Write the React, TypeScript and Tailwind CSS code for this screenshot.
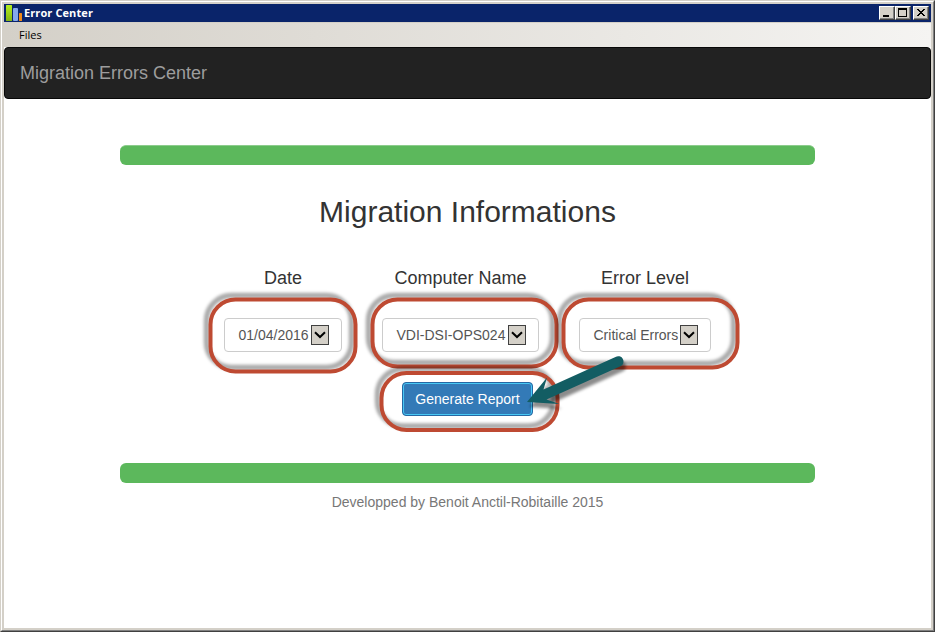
const arial = 'font-["Liberation_Sans",Arial,sans-serif]';

function WindowButton({ kind }: { kind: 'min' | 'max' | 'close' }) {
  return (
    <span className="block h-[14px] w-4 border border-t-white border-l-white border-r-[#404040] border-b-[#404040] bg-[#d4d0c8] shadow-[inset_-1px_-1px_0_#808080]">
      <svg width="14" height="12" viewBox="0 0 14 12" shapeRendering="crispEdges" className="block">
        {kind === 'min' && <rect x="3" y="8" width="6" height="2" fill="#000" />}
        {kind === 'max' && <path d="M2 1h9v9H2zM3 3v6h7V3z" fill="#000" fillRule="evenodd" />}
        {kind === 'close' && (
          <path
            d="M3 2h2v1h1v1h2V3h1V2h2v1h-1v1H9v1H8v1h1v1h1v1h1v1H9V8H8V7H6v1H5v1H3V8h1V7h1V6h1V5H5V4H4V3H3z"
            fill="#000"
          />
        )}
      </svg>
    </span>
  );
}

function TitleBar() {
  return (
    <div className="flex h-[18px] items-center bg-[#0a246a] pr-[2px] pl-[2px]">
      <svg width="16" height="18" viewBox="0 0 16 18" className="block shrink-0">
        <defs>
          <linearGradient id="lime" x1="0" y1="0" x2="0" y2="1">
            <stop offset="0" stopColor="#b4f01e" />
            <stop offset="1" stopColor="#84b414" />
          </linearGradient>
        </defs>
        <rect x="0" y="1" width="6" height="16" rx="0.5" fill="url(#lime)" />
        <rect x="7" y="4" width="5" height="13" rx="1" fill="#84a8ee" />
        <rect x="13" y="9" width="3" height="8" rx="0.5" fill="#f08a18" />
      </svg>
      <span className='ml-[2px] w-[140px] text-[11px] tracking-[0.1px] leading-[18px] font-bold whitespace-nowrap text-white font-["Open_Sans","Noto_Sans",sans-serif]'>
        Error Center
      </span>
      <span className="ml-auto flex">
        <WindowButton kind="min" />
        <WindowButton kind="max" />
        <span className="ml-[2px]">
          <WindowButton kind="close" />
        </span>
      </span>
    </div>
  );
}

function SelectBox({ value, className }: { value: string; className: string }) {
  return (
    <div className={`flex h-[34px] items-center rounded-[4px] border border-[#ccc] bg-white pl-[13.5px] text-[14px] text-[#555] ${className}`}>
      <span className="whitespace-nowrap">{value}</span>
      <span className="mr-[12px] ml-auto flex h-5 w-[18px] items-center justify-center border border-[#404040] bg-[#d4d0c8]">
        <svg width="12" height="8" viewBox="0 0 12 8" fill="none" className="shrink-0">
          <path d="M1 1.2 6 6 11 1.2" stroke="#000" strokeWidth="2" />
        </svg>
      </span>
    </div>
  );
}

const rings = [
  { x: 210.5, y: 299.5, w: 145, h: 72 },
  { x: 372.5, y: 299.5, w: 184, h: 67 },
  { x: 563.5, y: 299.5, w: 174, h: 68 },
  { x: 381.5, y: 373, w: 176, h: 57 },
];

const arrow = 'M615.500 357A5 5 0 0 1 621 366L546.500 399.500 559.500 404 527 402 547 377.500 543.500 389.500Z';

function Annotations() {
  return (
    <svg className="pointer-events-none absolute top-0 left-0" width="935" height="632" viewBox="0 0 935 632" fill="none">
      <defs>
        <filter id="soft" filterUnits="userSpaceOnUse" x="180" y="270" width="600" height="190">
          <feGaussianBlur stdDeviation="1.5" />
        </filter>
      </defs>
      {rings.map((r) => (
        <g key={`${r.x}-${r.y}`}>
          <rect x={r.x - 4} y={r.y - 4} width={r.w} height={r.h} rx="25" stroke="#000" strokeOpacity="0.33" strokeWidth="5.5" filter="url(#soft)" />
          <rect x={r.x} y={r.y} width={r.w} height={r.h} rx="25" stroke="#be4a32" strokeWidth="4" />
        </g>
      ))}
      <path d={arrow} transform="translate(2.500 5)" fill="#000" fillOpacity="0.45" filter="url(#soft)" />
      <path d={arrow} fill="#135d63" />
    </svg>
  );
}

export default function App() {
  return (
    <div className={`relative h-[632px] w-[935px] overflow-hidden bg-[#d4d0c8] ${arial}`}>
      <div className="h-full border-t border-r border-b border-l border-t-[#d4d0c8] border-r-[#404040] border-b-[#404040] border-l-[#d4d0c8]">
        <div className="h-full border border-t-white border-r-[#808080] border-b-[#808080] border-l-white p-[2px]">
          <div className="flex h-full flex-col bg-white">
            <TitleBar />
            <div className='h-[25px] shrink-0 border-t border-[#d4d0c8] bg-linear-to-r from-[#d4d0c8] to-[#f5f4f2] pl-[15px] text-[11px] leading-[24px] text-black font-["Open_Sans","Noto_Sans",sans-serif]'>
              Files
            </div>
            <nav className="flex h-[52px] shrink-0 items-center rounded-[4px] border border-[#080808] bg-[#222] pl-[15px] text-[18px] text-[#9d9d9d]">
              <span>Migration Errors Center</span>
            </nav>
            <main className="mx-auto flex w-[695px] flex-col items-center pt-[46px]">
              <div className="h-5 w-full rounded-[6px] border-t border-[#8ccc8c] bg-[#5cb85c]" />
              <h1 className="mt-[30px] text-[30px] leading-[33px] font-normal text-[#333]">Migration Informations</h1>
              <div className="mt-[40px] flex w-full pl-[104px] text-[18px] leading-5 text-[#333]">
                <div className="flex w-[118px] flex-col items-center">
                  <span>Date</span>
                  <SelectBox value="01/04/2016" className="mt-[30px] w-[118px]" />
                </div>
                <div className="ml-[40px] flex w-[157px] flex-col items-center">
                  <span>Computer Name</span>
                  <SelectBox value="VDI-DSI-OPS024" className="mt-[30px] w-[157px]" />
                </div>
                <div className="ml-[40px] flex w-[132px] flex-col items-center">
                  <span>Error Level</span>
                  <SelectBox value="Critical Errors" className="mt-[30px] w-[132px]" />
                </div>
              </div>
              <button className="mt-[30px] h-[34px] w-[131px] rounded-[4px] border border-[#2468a4] bg-[#337ab7] text-[14px] text-white shadow-[inset_0_0_0_1px_#48c8f4]">
                Generate Report
              </button>
              <div className="mt-[47px] h-[19.500px] w-full rounded-[6px] bg-[#5cb85c]" />
              <p className="mt-[9px] text-[14px] leading-5 text-[#777]">Developped by Benoit Anctil-Robitaille 2015</p>
            </main>
          </div>
        </div>
      </div>
      <Annotations />
    </div>
  );
}
